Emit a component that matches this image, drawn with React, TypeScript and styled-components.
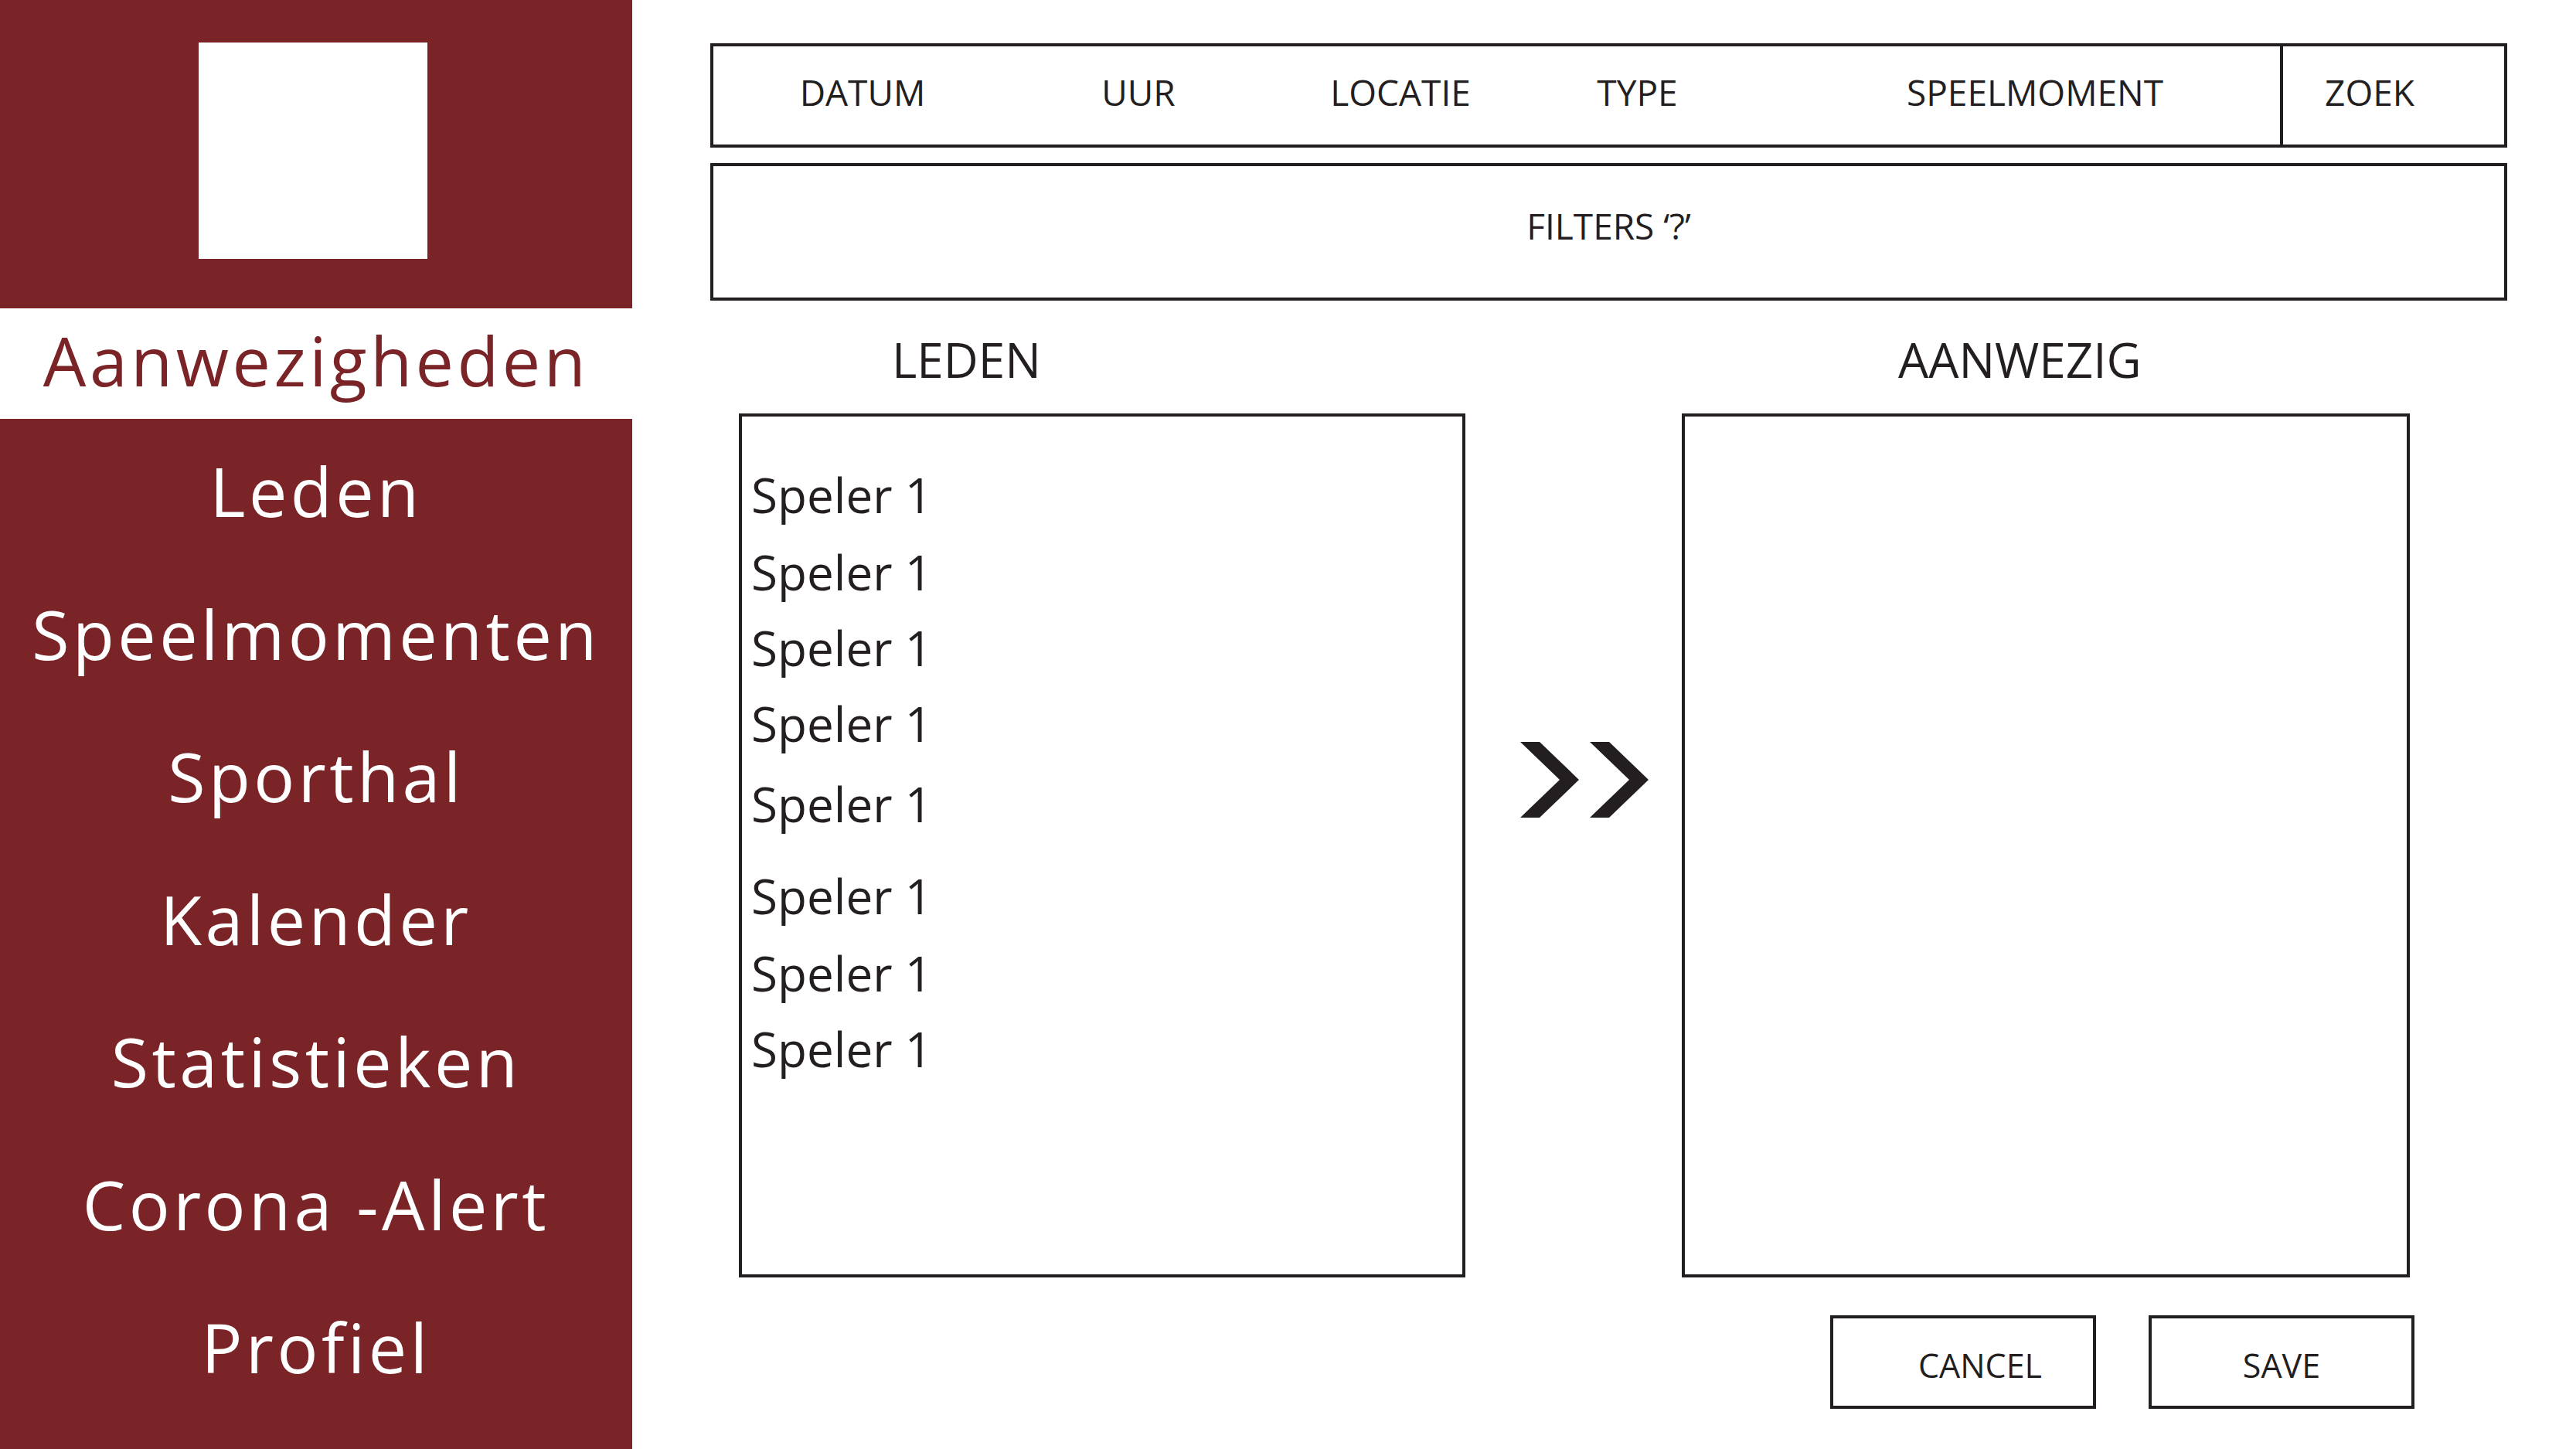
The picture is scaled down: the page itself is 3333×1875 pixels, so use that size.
import React from "react";
import styled, { createGlobalStyle } from "styled-components";

const RED = "#7b2428";
const INK = "#231f20";

const GlobalStyle = createGlobalStyle`
  html, body {
    margin: 0;
    padding: 0;
    background: #ffffff;
    font-family: "Open Sans", "Liberation Sans", sans-serif;
    color: ${INK};
  }
  * {
    box-sizing: border-box;
  }
`;

const Page = styled.div`
  display: flex;
  width: 100vw;
  height: 100vh;
  overflow: hidden;
`;

const Sidebar = styled.nav`
  width: 818px;
  flex-shrink: 0;
  background: ${RED};
  display: flex;
  flex-direction: column;
`;

const LogoArea = styled.div`
  height: 399px;
  padding: 55px 8px 0 0;
  display: flex;
  justify-content: center;
`;

const LogoBox = styled.div`
  width: 296px;
  height: 280px;
  background: #ffffff;
`;

const NavItem = styled.div<{ $active?: boolean }>`
  font-size: 88px;
  line-height: 1;
  letter-spacing: 4.5px;
  text-align: center;
  white-space: nowrap;
  color: ${(p) => (p.$active ? RED : "#ffffff")};
  background: ${(p) => (p.$active ? "#ffffff" : "transparent")};
  height: ${(p) => (p.$active ? "143px" : "184.6px")};
  padding-top: ${(p) => (p.$active ? "23px" : "49px")};
`;

const Main = styled.main`
  flex: 1;
  display: flex;
  flex-direction: column;
  padding: 56px 89px 0 101px;
`;

const TopBar = styled.div`
  display: flex;
  height: 135px;
  border: 4px solid ${INK};
`;

const BarCell = styled.div<{ $width?: number; $shift?: number }>`
  ${(p) => (p.$width ? `width: ${p.$width}px;` : "flex: 1;")}
  flex-shrink: 0;
  padding-top: 36px;
  padding-left: ${(p) => Math.max(p.$shift ?? 0, 0)}px;
  padding-right: ${(p) => Math.max(-(p.$shift ?? 0), 0)}px;
  font-size: 46px;
  line-height: 1;
  text-align: center;
  white-space: nowrap;
`;

const SearchCell = styled(BarCell)`
  border-left: 4px solid ${INK};
`;

const FiltersBar = styled.div`
  margin-top: 20px;
  height: 178px;
  border: 4px solid ${INK};
  padding-top: 54px;
  font-size: 46px;
  line-height: 1;
  text-align: center;
`;

const ListsGrid = styled.div`
  margin-top: 45px;
  margin-left: 37px;
  width: 2162px;
  display: grid;
  grid-template-columns: 940px 280px 942px;
  row-gap: 39px;
`;

const ListHeading = styled.div<{ $indent: number }>`
  font-size: 62px;
  line-height: 1;
  padding-left: ${(p) => p.$indent}px;
`;

const ListBox = styled.div`
  height: 1118px;
  border: 4px solid ${INK};
  padding: 70px 0 0 12px;
`;

const PlayerRow = styled.div<{ $space: number }>`
  font-size: 62px;
  line-height: 1;
  margin-top: ${(p) => p.$space}px;
`;

const TransferCell = styled.div`
  padding: 425px 0 0 71px;
`;

const Actions = styled.div`
  margin-top: 49px;
  margin-right: 120px;
  display: flex;
  justify-content: flex-end;
  gap: 68px;
`;

const ActionButton = styled.button<{ $shift?: number }>`
  width: 344px;
  height: 121px;
  border: 4px solid ${INK};
  border-radius: 0;
  background: #ffffff;
  color: ${INK};
  font-family: "Open Sans", "Liberation Sans", sans-serif;
  font-size: 43px;
  line-height: 1;
  padding: 39px 0 0 ${(p) => p.$shift ?? 0}px;
  display: flex;
  justify-content: center;
  align-items: flex-start;
  cursor: pointer;
`;

const navItems = [
  "Leden",
  "Speelmomenten",
  "Sporthal",
  "Kalender",
  "Statistieken",
  "Corona -Alert",
  "Profiel",
];

const barCells = [
  { label: "DATUM", width: 386 },
  { label: "UUR", width: 328 },
  { label: "LOCATIE", width: 350 },
  { label: "TYPE", width: 263 },
  { label: "SPEELMOMENT", shift: 66 },
];

// hand-placed rows in the mockup, so the spacing isn't uniform
const playerSpacing = [0, 38, 36, 36, 42, 57, 38, 36];

const DoubleChevron = () => (
  <svg width="166" height="98" viewBox="0 0 166 98">
    <polygon points="0,0 25,0 76,49 25,98 0,98 51,49" fill={INK} />
    <polygon points="90,0 115,0 166,49 115,98 90,98 141,49" fill={INK} />
  </svg>
);

const App: React.FC = () => {
  return (
    <>
      <GlobalStyle />
      <Page>
        <Sidebar>
          <LogoArea>
            <LogoBox />
          </LogoArea>
          <NavItem $active>Aanwezigheden</NavItem>
          {navItems.map((item) => (
            <NavItem key={item}>{item}</NavItem>
          ))}
        </Sidebar>

        <Main>
          <TopBar>
            {barCells.map((cell) => (
              <BarCell key={cell.label} $width={cell.width} $shift={cell.shift}>
                {cell.label}
              </BarCell>
            ))}
            <SearchCell $width={290} $shift={-62}>
              ZOEK
            </SearchCell>
          </TopBar>

          <FiltersBar>FILTERS ‘?’</FiltersBar>

          <ListsGrid>
            <ListHeading $indent={198}>LEDEN</ListHeading>
            <div />
            <ListHeading $indent={280}>AANWEZIG</ListHeading>

            <ListBox>
              {playerSpacing.map((space, i) => (
                <PlayerRow key={i} $space={space}>
                  Speler 1
                </PlayerRow>
              ))}
            </ListBox>
            <TransferCell>
              <DoubleChevron />
            </TransferCell>
            <ListBox />
          </ListsGrid>

          <Actions>
            <ActionButton $shift={44}>CANCEL</ActionButton>
            <ActionButton>SAVE</ActionButton>
          </Actions>
        </Main>
      </Page>
    </>
  );
};

export default App;
